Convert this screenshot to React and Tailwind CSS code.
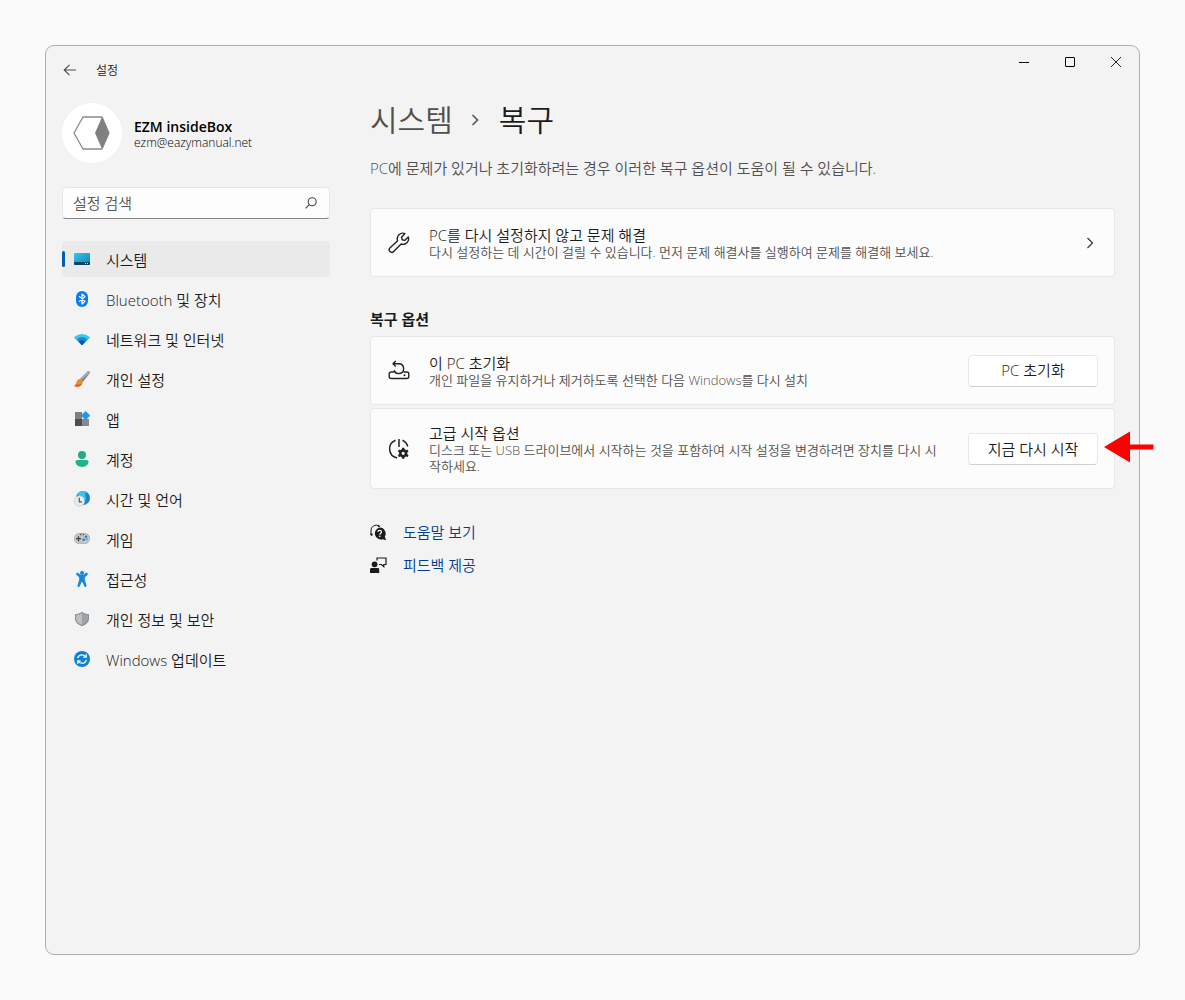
function BackIcon() {
  return (
    <svg width="14" height="12" viewBox="0 0 14 12" fill="none" stroke="#4a4a4a" strokeWidth="1.1" aria-hidden="true">
      <path d="M6.5 0.8 1.2 6l5.3 5.2M1.2 6H13" />
    </svg>
  );
}

function SystemIcon() {
  return (
    <svg width="16" height="16" viewBox="0 0 16 16" aria-hidden="true">
      <defs>
        <linearGradient id="sysTop" x1="0" y1="0" x2="1" y2="1">
          <stop offset="0" stopColor="#35c5ea" />
          <stop offset="1" stopColor="#0f83b8" />
        </linearGradient>
      </defs>
      <rect x="0" y="2" width="16" height="12" rx="1" fill="url(#sysTop)" />
      <path d="M0 11h16v2a1 1 0 0 1-1 1H1a1 1 0 0 1-1-1z" fill="#0b4668" />
      <path d="M11 12h1v1h-1zM13 12h1v1h-1z" fill="#a9e2f5" />
    </svg>
  );
}

function BluetoothIcon() {
  return (
    <svg width="16" height="16" viewBox="0 0 16 16" aria-hidden="true">
      <rect x="2" y="0" width="12" height="16" rx="6" fill="#0a7cf0" />
      <path d="M5 5.2 11 10.4 8 13V3l3 2.6L5 10.8" fill="none" stroke="#fff" strokeWidth="1.2" strokeLinejoin="round" />
    </svg>
  );
}

function WifiIcon() {
  return (
    <svg width="16" height="16" viewBox="0 0 16 16" aria-hidden="true">
      <path d="M0.3 6Q8-0.2 15.7 6q.5.5 0 1L8.6 13.7q-.6.5-1.2 0L.3 7q-.5-.5 0-1z" fill="#3cc4f2" />
      <path d="M2.6 8.2Q8 3.6 13.4 8.2L8.6 13.7q-.6.5-1.2 0z" fill="#168fd8" />
      <path d="M4.6 10.4Q8 7.4 11.4 10.4L8.6 13.7q-.6.5-1.2 0z" fill="#0e5aa8" />
    </svg>
  );
}

function BrushIcon() {
  return (
    <svg width="16" height="16" viewBox="0 0 16 16" aria-hidden="true">
      <path d="M15.4.4c.8.7.6 1.6 0 2.4L8.8 11 5.6 8.2 13 .9c.7-.7 1.7-1.1 2.4-.5z" fill="#7d838a" />
      <path d="M15.4.4c.5.4.6.9.4 1.5L6.8 9.2 5.6 8.2 13 .9c.7-.7 1.7-1.1 2.4-.5z" fill="#a9aeb3" />
      <path d="M5.4 8.1 8.900 11c-.6 2.600-2.600 5-5.800 4.800-1.300 0-2.300-.3-3-.8C1.500 14.200 2 12.600 2.500 11 3 9.500 3.900 8.300 5.400 8.100z" fill="#f08a2c" />
      <path d="M2.200 13.200c1.600.6 4 .2 6-1-.9 2.200-2.600 3.700-5.100 3.600-1.300 0-2.300-.3-3-.8 1-.4 1.700-.9 2.100-1.800z" fill="#ea5d1c" />
    </svg>
  );
}

function AppsIcon() {
  return (
    <svg width="16" height="16" viewBox="0 0 16 16" aria-hidden="true">
      <rect x="1" y="1" width="7" height="7" fill="#7c8084" />
      <rect x="1" y="8" width="7" height="7" fill="#4a4d51" />
      <rect x="8" y="8" width="7" height="7" fill="#85898e" />
      <path d="M11.500 0.200 16 4.600 11.500 9 7.200 4.600z" fill="#2196e8" stroke="#2196e8" strokeWidth="0.500" strokeLinejoin="round" />
    </svg>
  );
}

function AccountIcon() {
  return (
    <svg width="16" height="16" viewBox="0 0 16 16" aria-hidden="true">
      <circle cx="8" cy="4" r="4" fill="#22ab85" />
      <path d="M3.500 9h9c1.200 0 2 .8 2 1.800 0 3.100-2.900 5.200-6.500 5.200s-6.500-2.100-6.500-5.200c0-1 .8-1.800 2-1.800z" fill="#20b48d" />
    </svg>
  );
}

function TimeIcon() {
  return (
    <svg width="16" height="16" viewBox="0 0 16 16" aria-hidden="true">
      <circle cx="9" cy="7" r="7" fill="#1686d2" />
      <path d="M3.500 2.800A7 7 0 0 1 12 .7c-1 2.600-1 5.500.5 7.600L6 9z" fill="#3cc3ec" />
      <circle cx="5.500" cy="10" r="5.200" fill="#e9ebec" stroke="#b4babe" strokeWidth="0.500" />
      <path d="M5.300 6.800v4h2.700" fill="none" stroke="#55595d" strokeWidth="1.200" />
    </svg>
  );
}

function GameIcon() {
  return (
    <svg width="16" height="16" viewBox="0 0 16 16" aria-hidden="true">
      <rect x="0" y="2" width="16" height="11" rx="5.500" fill="#a9adb2" />
      <rect x="0.500" y="3" width="15" height="9.500" rx="4.750" fill="#c3c6c9" />
      <path d="M4.500 5.200v5M2 7.700h5" stroke="#3d4247" strokeWidth="1.300" />
      <path d="M6 3h1.200v1.200H6zM8.800 3H10v1.200H8.800z" fill="#4a4e52" />
      <circle cx="12" cy="5.800" r="1.200" fill="#1a7fd6" />
      <circle cx="9.700" cy="8.800" r="1.300" fill="#1a7fd6" />
      <circle cx="12.800" cy="8.200" r="1" fill="#4b9fe0" />
    </svg>
  );
}

function AccessIcon() {
  return (
    <svg width="16" height="16" viewBox="0 0 16 16" aria-hidden="true">
      <circle cx="8" cy="2" r="2" fill="#1587dd" />
      <path d="M2.500 2.200c.5-.6 1.200-.5 1.800-.1C5.500 3.400 6.500 4 8 4s2.500-.6 3.700-1.900c.6-.4 1.300-.5 1.800.1.500.5.400 1.200-.1 1.700L10.800 6.300v2.500l1.700 5.600c.1.700-.2 1.200-.8 1.500-.7.200-1.300-.1-1.500-.8L8.400 11h-.8l-1.800 4.100c-.200.700-.8 1-1.500.8-.6-.3-.9-.8-.8-1.500l1.700-5.600V6.300L2.600 3.900c-.5-.5-.6-1.200-.1-1.700z" fill="#1587dd" />
    </svg>
  );
}

function ShieldIcon() {
  return (
    <svg width="16" height="16" viewBox="0 0 16 16" aria-hidden="true">
      <path d="M8 .8c2 1.500 4.300 2.200 7 2.400v4.300c0 3.600-2.500 6-7 7.700-4.500-1.700-7-4.100-7-7.700V3.200C3.700 3 6 2.300 8 .8z" fill="#888c90" />
      <path d="M8 2c1.800 1.200 3.700 1.900 6 2.100v3.500c0 3-2 5-6 6.500z" fill="#9ea2a5" />
      <path d="M8 2C6.200 3.200 4.300 3.900 2 4.100v3.500c0 3 2 5 6 6.500z" fill="#bcbfc1" />
    </svg>
  );
}

function UpdateIcon() {
  return (
    <svg width="16" height="16" viewBox="0 0 16 16" aria-hidden="true">
      <circle cx="8" cy="8" r="8" fill="#0f82d6" />
      <g fill="none" stroke="#fff" strokeWidth="1.300">
        <path d="M3.600 7.200C4.200 5 6 3.800 8 3.800c1.500 0 2.800.7 3.700 1.900" />
        <path d="M12.200 3.200v2.900H9.300" />
        <path d="M12.400 8.800c-.6 2.200-2.400 3.400-4.400 3.400-1.500 0-2.800-.7-3.700-1.900" />
        <path d="M3.800 12.800V9.900h2.900" />
      </g>
    </svg>
  );
}

function WrenchIcon() {
  return (
    <svg width="22" height="22" viewBox="0 0 22 22" fill="none" stroke="#222" strokeWidth="1.400" strokeLinejoin="round" aria-hidden="true">
      <path d="M16.900 1.600a5.600 5.600 0 0 0-7.300 7.100L1.900 15.900a2.500 2.500 0 0 0 3.800 3.600l7.400-7.500a5.600 5.600 0 0 0 7.200-7L16.700 8.400l-2.500-.6-.7-2.600z" />
    </svg>
  );
}

function ResetIcon() {
  return (
    <svg width="22" height="22" viewBox="0 0 22 22" fill="none" stroke="#222" strokeWidth="1.400" strokeLinejoin="round" aria-hidden="true">
      <path d="M6.500 12H3.200a2 2 0 0 0-2 2v2.500a2 2 0 0 0 2 2h15.600a2 2 0 0 0 2-2V14a2 2 0 0 0-2-2h-3.300" />
      <path d="M5 3.800h5.800a4.900 4.900 0 1 1-4.700 6.500" />
      <path d="M7.800 1 5 3.800l2.800 2.800" />
      <circle cx="16.500" cy="15.200" r="1" fill="#222" stroke="none" />
    </svg>
  );
}

function StartupIcon() {
  return (
    <svg width="22" height="22" viewBox="0 0 22 22" fill="none" stroke="#222" strokeWidth="1.500" aria-hidden="true">
      <path d="M11 1v8" />
      <path d="M7.500 2.300a9.200 9.200 0 0 0 1.500 17.600" />
      <path d="M14.500 2.300a9.200 9.200 0 0 1 5.200 6.200" />
      <circle cx="15.200" cy="15.300" r="2.900" strokeWidth="2.600" />
      <path d="M15.200 9.800v2.400M15.200 18.400v2.400M10.400 12.500l2.200 1.300M17.800 16.800l2.200 1.300M10.400 18.100l2.200-1.300M17.800 13.800l2.200-1.300" strokeWidth="2.400" />
    </svg>
  );
}

function HelpIcon() {
  return (
    <svg width="17" height="17" viewBox="0 0 17 17" aria-hidden="true">
      <path d="M1 11V7a5.200 5.200 0 0 1 8-5" fill="none" stroke="#1b1b1b" />
      <path d="M0 9.500h2.500v2.200H1zM8 .5l2.500 2L8 3.200z" fill="#1b1b1b" />
      <path d="M9.700 3.600a6 6 0 0 1 5.100 9.100l1.400 3.500-3.500-1a6 6 0 1 1-3-11.600z" fill="#1b1b1b" />
      <path d="M7.900 8c0-1 .7-1.700 1.800-1.700s1.800.7 1.800 1.600c0 1.300-1.700 1.300-1.700 2.800" fill="none" stroke="#fff" strokeWidth="1.200" />
      <circle cx="9.800" cy="12.300" r=".8" fill="#fff" />
    </svg>
  );
}

function FeedbackIcon() {
  return (
    <svg width="17" height="17" viewBox="0 0 17 17" aria-hidden="true">
      <circle cx="4.600" cy="7.300" r="2.900" fill="#1b1b1b" />
      <path d="M1.500 11h6.300c.8 0 1.400.6 1.400 1.400V16H0v-3.500c0-.9.600-1.500 1.500-1.500z" fill="#1b1b1b" />
      <path d="M7 3.500V1h9v6.500h-2.200v2.200l-2.400-2.200H9" fill="none" stroke="#1b1b1b" strokeWidth="1.200" />
    </svg>
  );
}

const navItems = [
  { label: "시스템", Icon: SystemIcon, active: true },
  { label: "Bluetooth 및 장치", Icon: BluetoothIcon },
  { label: "네트워크 및 인터넷", Icon: WifiIcon },
  { label: "개인 설정", Icon: BrushIcon },
  { label: "앱", Icon: AppsIcon },
  { label: "계정", Icon: AccountIcon },
  { label: "시간 및 언어", Icon: TimeIcon },
  { label: "게임", Icon: GameIcon },
  { label: "접근성", Icon: AccessIcon },
  { label: "개인 정보 및 보안", Icon: ShieldIcon },
  { label: "Windows 업데이트", Icon: UpdateIcon },
];

function TitleBar() {
  return (
    <header className="flex items-start justify-between">
      <div className="flex h-12 items-center gap-[18px] pl-4">
        <button type="button" aria-label="뒤로" className="flex w-4 justify-center">
          <BackIcon />
        </button>
        <span className="pt-0.5 text-xs">설정</span>
      </div>
      <div className="flex">
        <button type="button" aria-label="최소화" className="flex h-8 w-[46px] items-center justify-center">
          <span className="h-px w-2.5 bg-black" />
        </button>
        <button type="button" aria-label="최대화" className="flex h-8 w-[46px] items-center justify-center">
          <span className="size-2.5 rounded-[1px] border border-black" />
        </button>
        <button type="button" aria-label="닫기" className="flex h-8 w-[46px] items-center justify-center">
          <svg width="10" height="10" viewBox="0 0 10 10" stroke="#222" aria-hidden="true">
            <path d="M0 0l10 10M10 0L0 10" />
          </svg>
        </button>
      </div>
    </header>
  );
}

function Sidebar() {
  return (
    <aside className="w-[268px] shrink-0 pt-[9px]">
      <div className="flex items-center gap-3">
        <div className="flex size-15 items-center justify-center rounded-full bg-white">
          <svg width="38" height="34" viewBox="0 0 38 34" aria-hidden="true">
            <path d="M10 1h19l7 16-7 16H10L1 17z" fill="#fff" stroke="#8a8a8a" strokeWidth="1.300" strokeLinejoin="round" />
            <path d="M29 1l7 16-7 16-7-16z" fill="#808080" />
          </svg>
        </div>
        <div className="pt-1 text-black">
          <p className="text-sm leading-4 font-semibold">EZM insideBox</p>
          <p className="text-xs leading-4">ezm@eazymanual.net</p>
        </div>
      </div>
      <div className="mt-6 flex h-8 items-center rounded border border-[#e5e5e5] border-b-[#868686] bg-[#fdfdfd] pr-3 pl-2.5">
        <input
          type="text"
          aria-label="설정 검색"
          placeholder="설정 검색"
          className="min-w-0 flex-1 bg-transparent text-[15px] outline-none placeholder:text-[#555]"
        />
        <svg width="12" height="12" viewBox="0 0 12 12" fill="none" stroke="#444" strokeWidth="1.100" aria-hidden="true">
          <circle cx="7.200" cy="4.800" r="4" />
          <path d="M4.300 7.700.6 11.400" />
        </svg>
      </div>
      <nav className="mt-[22px] flex flex-col gap-1">
        {navItems.map(({ label, Icon, active }) => (
          <a
            key={label}
            href="#"
            aria-current={active ? "page" : undefined}
            className={
              active
                ? "relative flex h-9 items-center gap-4 rounded bg-[#eaeaea] pl-3 text-[15px]"
                : "flex h-9 items-center gap-4 rounded pl-3 text-[15px]"
            }
          >
            {active && <span className="absolute top-2.5 left-0 h-4 w-[3px] rounded-full bg-[#0060b0]" />}
            <Icon />
            <span className="pt-0.5">{label}</span>
          </a>
        ))}
      </nav>
    </aside>
  );
}

function CardText({ title, children }) {
  return (
    <div className="min-w-0 flex-1 pr-1">
      <h3 className="text-[15px] leading-[18px]">{title}</h3>
      <p className="text-[13px] leading-4 text-[#505050]">{children}</p>
    </div>
  );
}

function CardButton({ children }) {
  return (
    <button
      type="button"
      className="h-8 w-[130px] shrink-0 rounded border border-[#e8e8e8] border-b-[#d0d0d0] bg-white text-[15px]"
    >
      {children}
    </button>
  );
}

function Main() {
  return (
    <main className="min-w-0 flex-1 pt-1">
      <h1 className="flex h-11 items-center text-[30px] leading-11">
        <a href="#" className="text-[#505050]">시스템</a>
        <svg width="8" height="12" viewBox="0 0 8 12" className="mr-5 ml-[18px]" fill="none" stroke="#555" strokeWidth="1.600" aria-hidden="true">
          <path d="M1.500 1l5 5-5 5" />
        </svg>
        <span>복구</span>
      </h1>
      <p className="mt-3.5 text-[15px] leading-6 text-[#505050]">
        PC에 문제가 있거나 초기화하려는 경우 이러한 복구 옵션이 도움이 될 수 있습니다.
      </p>
      <a href="#" className="mt-7 flex h-[69px] items-center gap-[19px] rounded border border-[#e7e7e7] bg-[#fcfcfc] pr-5 pl-[17px]">
        <WrenchIcon />
        <CardText title="PC를 다시 설정하지 않고 문제 해결">
          다시 설정하는 데 시간이 걸릴 수 있습니다. 먼저 문제 해결사를 실행하여 문제를 해결해 보세요.
        </CardText>
        <svg width="8" height="12" viewBox="0 0 8 12" fill="none" stroke="#333" strokeWidth="1.200" aria-hidden="true">
          <path d="M1.500 1l5 5-5 5" />
        </svg>
      </a>
      <h2 className="mt-[30px] text-[15px] leading-6 font-semibold">복구 옵션</h2>
      <div className="mt-[5px] flex flex-col gap-[3px]">
        <section className="flex min-h-[69px] items-center gap-[19px] rounded border border-[#e7e7e7] bg-[#fcfcfc] pr-4 pl-[17px]">
          <ResetIcon />
          <CardText title="이 PC 초기화">
            개인 파일을 유지하거나 제거하도록 선택한 다음 Windows를 다시 설치
          </CardText>
          <CardButton>PC 초기화</CardButton>
        </section>
        <section className="relative flex items-center gap-[19px] rounded border border-[#e7e7e7] bg-[#fcfcfc] pt-[15px] pr-4 pb-3.5 pl-[17px]">
          <StartupIcon />
          <CardText title="고급 시작 옵션">
            디스크 또는 USB 드라이브에서 시작하는 것을 포함하여 시작 설정을 변경하려면 장치를 다시 시작하세요.
          </CardText>
          <CardButton>지금 다시 시작</CardButton>
          <svg width="50" height="32" viewBox="0 0 50 32" className="absolute top-[22px] -right-10" fill="#fe0000" aria-hidden="true">
            <path d="M0 16 26 0.500v13h23.500v5H26v13z" />
          </svg>
        </section>
      </div>
      <div className="mt-[31px] flex flex-col gap-[9px] text-[15px] leading-6 text-[#003e92]">
        <a href="#" className="flex items-center gap-4">
          <HelpIcon />
          도움말 보기
        </a>
        <a href="#" className="flex items-center gap-4">
          <FeedbackIcon />
          피드백 제공
        </a>
      </div>
    </main>
  );
}

export default function App() {
  return (
    <div className="flex min-h-screen bg-[#fafafa] p-[45px] font-['Open_Sans','Noto_Sans_CJK_KR',sans-serif] font-[350] text-[#1b1b1b]">
      <div className="min-w-0 flex-1 rounded-[9px] border border-[#b0b0b0] bg-[#f3f3f3]">
        <TitleBar />
        <div className="flex gap-10 pr-6 pl-4">
          <Sidebar />
          <Main />
        </div>
      </div>
    </div>
  );
}
